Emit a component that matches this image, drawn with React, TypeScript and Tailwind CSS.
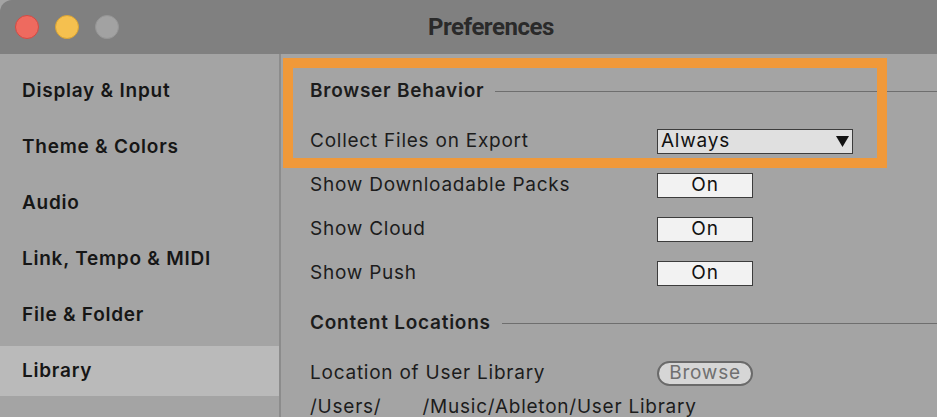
import React from 'react';

const sidebarItems = [
  'Display & Input',
  'Theme & Colors',
  'Audio',
  'Link, Tempo & MIDI',
  'File & Folder',
  'Library',
];

const font = { fontFamily: 'Inter, "Noto Sans", sans-serif' };

function SectionHeader({ title }: { title: string }) {
  return (
    <div className="flex h-[44px] items-center pt-[1px]">
      <span className="text-[19px] font-semibold tracking-[0.04em] text-[#1c1c1c]">{title}</span>
      <div className="ml-[11px] h-px flex-1 bg-[#6e6e6e]" />
    </div>
  );
}

function ToggleRow({ label }: { label: string }) {
  return (
    <div className="flex h-[44px] items-center">
      <span className="w-[347px] pt-[1px] text-[19px] tracking-[0.04em] text-[#1c1c1c]">{label}</span>
      <div className="flex h-[25px] w-[96px] items-center justify-center border border-[#3c3c3c] bg-[#f2f2f2] text-[19px] tracking-[0.04em] text-[#111]">
        On
      </div>
    </div>
  );
}

export default function App() {
  return (
    <div className="flex h-[417px] w-[937px] flex-col overflow-hidden bg-[#a4a4a4]" style={font}>
      <div className="relative flex h-[54px] shrink-0 items-center rounded-tl-[12px] bg-[#808080]">
        <div className="flex gap-[16px] pl-[15px]">
          <div className="h-[24px] w-[24px] rounded-full border border-[#d24a44] bg-[#ee6a5f]" />
          <div className="h-[24px] w-[24px] rounded-full border border-[#d8a334] bg-[#f5c04f]" />
          <div className="h-[24px] w-[24px] rounded-full border border-[#959595] bg-[#a2a2a2]" />
        </div>
        <div
          className="absolute left-[428px] top-[9px] text-[24px] font-bold tracking-[-0.02em] text-[#2a2a2a]"
          style={{ fontFamily: 'Roboto, sans-serif' }}
        >
          Preferences
        </div>
      </div>
      <div className="flex flex-1">
        <div className="flex w-[281px] shrink-0 flex-col gap-[6px] border-r-2 border-[#8c8c8c] pt-[12px]">
          {sidebarItems.map((item) => (
            <div
              key={item}
              className={`flex h-[50px] shrink-0 items-center pl-[22px] pt-[1px] text-[19px] font-semibold tracking-[0.04em] text-[#161616] ${
                item === 'Library' ? 'bg-[#bababa]' : ''
              }`}
            >
              {item}
            </div>
          ))}
        </div>
        <div className="relative flex-1 pl-[29px] pt-[15px]">
          <div className="absolute left-[2px] top-[4px] h-[110px] w-[604px] border-[10px] border-[#f0993a]" />
          <SectionHeader title="Browser Behavior" />
          <div className="mt-[6px] flex h-[44px] items-center">
            <span className="w-[347px] pt-[1px] text-[19px] tracking-[0.04em] text-[#1c1c1c]">Collect Files on Export</span>
            <div className="flex h-[25px] w-[196px] items-center justify-between border border-[#3c3c3c] bg-[#e0e0e0] px-[3px] text-[19px] tracking-[0.04em] text-[#111]">
              <span>Always</span>
              <svg width="13" height="11" viewBox="0 0 13 11">
                <polygon points="0,0 13,0 6.5,11" fill="#111" />
              </svg>
            </div>
          </div>
          <ToggleRow label="Show Downloadable Packs" />
          <ToggleRow label="Show Cloud" />
          <ToggleRow label="Show Push" />
          <div className="mt-[6px]">
            <SectionHeader title="Content Locations" />
          </div>
          <div className="mt-[6px] flex h-[44px] items-center">
            <span className="w-[347px] pt-[1px] text-[19px] tracking-[0.04em] text-[#1c1c1c]">Location of User Library</span>
            <div className="flex h-[25px] w-[96px] items-center justify-center rounded-full border-2 border-[#6a6a6a] bg-[#d6d6d6] text-[19px] tracking-[0.04em] text-[#707070]">
              Browse
            </div>
          </div>
          <div className="flex h-[24px] items-center gap-[41px] pt-[1px] text-[19px] tracking-[0.04em] text-[#1c1c1c]">
            <span>/Users/</span>
            <span>/Music/Ableton/User Library</span>
          </div>
        </div>
      </div>
    </div>
  );
}
